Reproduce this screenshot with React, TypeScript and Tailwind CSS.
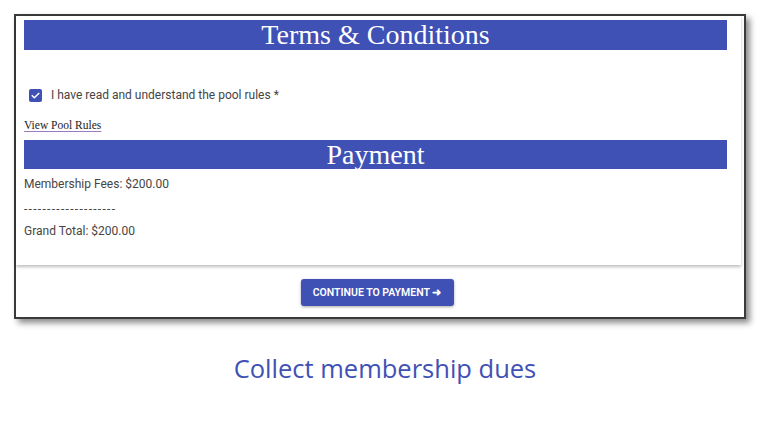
import React from "react";

export default function App() {
  return (
    <div className="w-[760px] h-[424px] bg-white relative overflow-hidden" style={{ fontFamily: "Roboto, 'Liberation Sans', sans-serif" }}>
      <div className="pl-[14px] pt-[14px]">
        <div className="w-[732px] h-[305px] border-2 border-[#3a3a3a] bg-white shadow-[4px_4px_6px_rgba(0,0,0,0.45)] flex flex-col">
          <div className="w-[725px] bg-white shadow-[0_2px_3px_rgba(0,0,0,0.25)] pl-[8px] pr-[14px] pt-[4px] pb-[26px] text-[12px] text-[#454545]">
            <div className="h-[30px] bg-[#3f51b5] flex items-center justify-center text-white text-[28px] leading-none" style={{ fontFamily: "'Liberation Serif', serif" }}>
              Terms &amp; Conditions
            </div>
            <div className="mt-[36px] h-[18px] flex items-center pl-[5px]">
              <span className="w-[13px] h-[13px] rounded-[2px] bg-[#3f51b5] flex items-center justify-center">
                <svg width="11" height="11" viewBox="0 0 24 24" fill="none" stroke="white" strokeWidth="3.2" strokeLinecap="square">
                  <path d="M5 12.5l4.5 4.5L19 7.5" />
                </svg>
              </span>
              <span className="ml-[9px] leading-none">I have read and understand the pool rules *</span>
            </div>
            <div className="mt-[14px] h-[16px] flex items-center">
              <span className="text-[11.5px] text-[#222] underline decoration-[#9b7bc0] underline-offset-2" style={{ fontFamily: "'Liberation Serif', serif" }}>View Pool Rules</span>
            </div>
            <div className="mt-[6px] h-[29px] bg-[#3f51b5] flex items-center justify-center text-white text-[28px] leading-none" style={{ fontFamily: "'Liberation Serif', serif" }}>
              Payment
            </div>
            <div className="mt-[7px] h-[16px] flex items-center">Membership Fees: $200.00</div>
            <div className="mt-[9px] h-[16px] flex items-center tracking-[1.3px]">--------------------</div>
            <div className="mt-[6px] h-[16px] flex items-center">Grand Total: $200.00</div>
          </div>
          <div className="w-[722px] flex justify-center pt-[14px]">
            <button className="w-[153px] h-[27px] bg-[#3f51b5] rounded-[3px] text-white text-[10.5px] font-semibold shadow-[0_1px_3px_rgba(0,0,0,0.35)] flex items-center justify-center">
              CONTINUE TO PAYMENT ➜
            </button>
          </div>
        </div>
      </div>
      <div className="mt-[30px] pl-[10px] text-center text-[25.5px] text-[#3f51b5]" style={{ fontFamily: "'Open Sans', 'Noto Sans', sans-serif" }}>
        Collect membership dues
      </div>
    </div>
  );
}
